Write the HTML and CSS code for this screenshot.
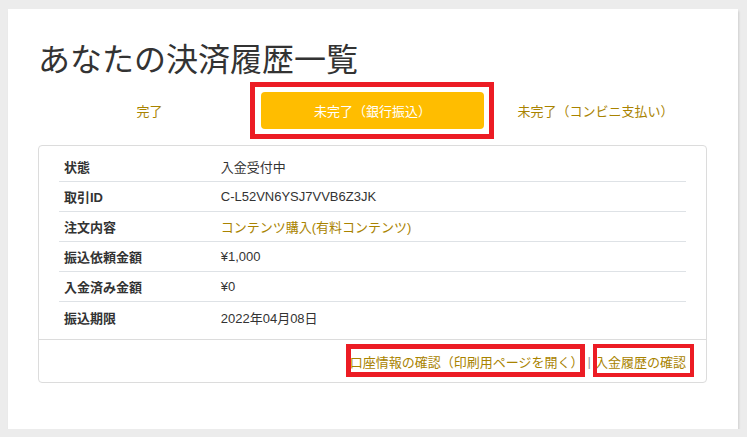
FILE: index.html
```html
<!DOCTYPE html>
<html lang="ja">
<head>
<meta charset="utf-8">
<title>決済履歴</title>
<link rel="stylesheet" href="styles.css">
</head>
<body>
<div class="page">
  <h1 class="title">あなたの決済履歴一覧</h1>
  <div class="tabs">
    <div class="tab">完了</div>
    <div class="tab tab-active">未完了（銀行振込）</div>
    <div class="tab">未完了（コンビニ支払い）</div>
  </div>
  <div class="card">
    <div class="card-body">
      <div class="row"><div class="label">状態</div><div class="value">入金受付中</div></div>
      <div class="row"><div class="label">取引ID</div><div class="value">C-L52VN6YSJ7VVB6Z3JK</div></div>
      <div class="row"><div class="label">注文内容</div><div class="value value-link">コンテンツ購入(有料コンテンツ)</div></div>
      <div class="row"><div class="label">振込依頼金額</div><div class="value">¥1,000</div></div>
      <div class="row"><div class="label">入金済み金額</div><div class="value">¥0</div></div>
      <div class="row"><div class="label">振込期限</div><div class="value">2022年04月08日</div></div>
    </div>
    <div class="card-footer">
      <span class="link link-account">口座情報の確認（印刷用ページを開く）</span><span class="sep">|</span><span class="link link-history">入金履歴の確認</span>
    </div>
  </div>
</div>
</body>
</html>
```
FILE: styles.css
```css
* { box-sizing: border-box; }
html, body { margin: 0; padding: 0; }
body {
  background: #ececec;
  font-family: "Liberation Sans", Arial, "Noto Sans CJK JP", sans-serif;
  font-size: 13px;
  color: #333;
  padding: 9px 0 0 8px;
}
.page {
  width: 730px;
  height: 420px;
  background: #fff;
  box-shadow: 1px 2px 2px rgba(0,0,0,0.12);
  padding: 29px 30px 0 30px;
}
.title {
  margin: 0;
  font-family: "Noto Sans CJK JP", sans-serif;
  font-weight: 400;
  font-size: 32px;
  line-height: 38px;
  color: #333;
}
.tabs {
  margin-top: 16px;
  display: grid;
  grid-template-columns: 1fr 1fr 1fr;
  width: 669px;
}
.tab {
  height: 37px;
  line-height: 37px;
  text-align: center;
  color: #a98300;
  font-family: "Noto Sans CJK JP", sans-serif;
  font-size: 13px;
}
.tab-active {
  position: relative;
  background: #ffbd00;
  color: #fff;
  border-radius: 4px;
}
.tab-active::after {
  content: "";
  position: absolute;
  top: -10px;
  bottom: -10px;
  left: -11px;
  right: -10px;
  border: 5px solid #ec1c24;
}
.card {
  margin-top: 16px;
  width: 669px;
  border: 1px solid #dcdcdc;
  border-radius: 4px;
}
.card-body {
  padding: 6px 20px 7px 20px;
}
.row {
  display: flex;
  height: 30px;
  align-items: center;
  border-bottom: 1px solid #dee2e6;
}
.row:last-child { border-bottom: none; height: 30px; }
.label {
  width: 25%;
  padding-left: 5px;
  font-weight: 700;
}
.value {
  padding-left: 5px;
}
.value-link { color: #a98300; }
.card-footer {
  border-top: 1px solid #dcdcdc;
  height: 43px;
  padding: 0 20px;
  display: flex;
  justify-content: flex-end;
  align-items: center;
  line-height: 19px;
}
.link {
  color: #a98300;
  position: relative;
  font-family: "Noto Sans CJK JP", sans-serif;
}
.sep {
  color: #999;
  padding: 0 4px;
}
.link::after {
  content: "";
  position: absolute;
  border: 5px solid #ec1c24;
  top: -8px;
  bottom: -6px;
}
.link-account::after { left: -4px; right: -1px; }
.link-history::after { left: -2px; right: -8px; border-width: 4px; }
```
